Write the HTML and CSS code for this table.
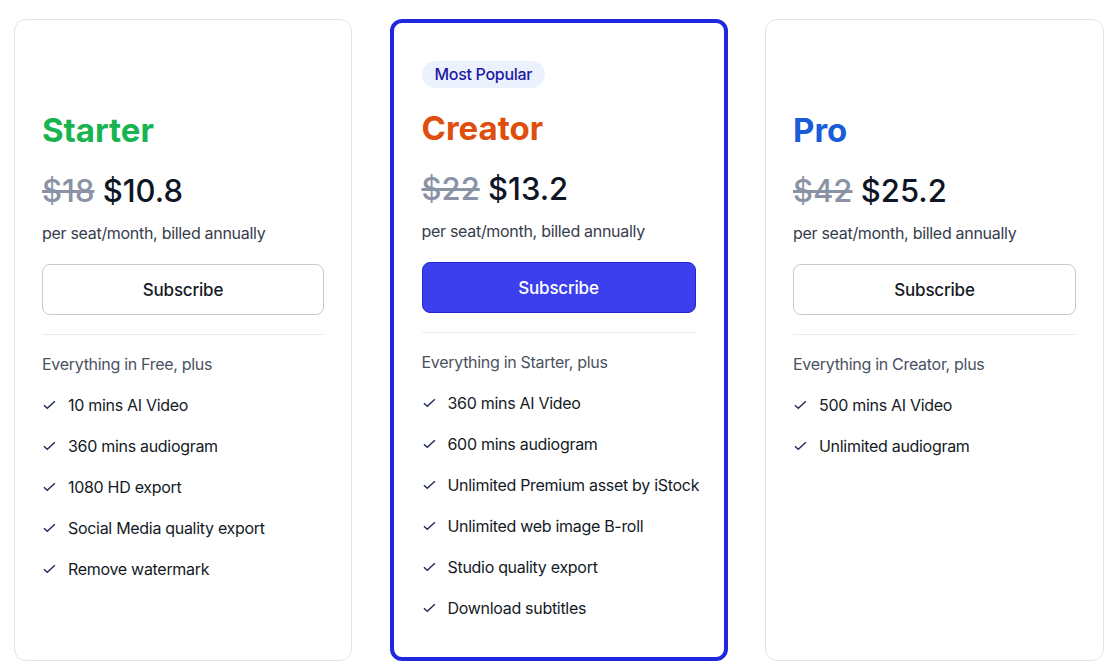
FILE: index.html
```html
<!DOCTYPE html>
<html lang="en">
<head>
    <meta charset="UTF-8">
    <meta name="viewport" content="width=device-width, initial-scale=1.0">
    <title>Pricing</title>
    <link rel="stylesheet" href="styles.css">
</head>
<body>
    <div class="plans">
        <!-- Starter -->
        <div class="card">
            <span class="badge hidden">Most Popular</span>
            <h2 class="plan-name starter">Starter</h2>
            <div class="price"><s class="old">$18</s> <span class="new">$10.8</span></div>
            <p class="per">per seat/month, billed annually</p>
            <button class="btn">Subscribe</button>
            <hr class="divider">
            <p class="plus">Everything in Free, plus</p>
            <ul class="features">
                <li><svg class="check" viewBox="0 0 14 10"><path d="M1 5.2 4.6 8.6 12.8 1"/></svg>10 mins AI Video</li>
                <li><svg class="check" viewBox="0 0 14 10"><path d="M1 5.2 4.6 8.6 12.8 1"/></svg>360 mins audiogram</li>
                <li><svg class="check" viewBox="0 0 14 10"><path d="M1 5.2 4.6 8.6 12.8 1"/></svg>1080 HD export</li>
                <li><svg class="check" viewBox="0 0 14 10"><path d="M1 5.2 4.6 8.6 12.8 1"/></svg>Social Media quality export</li>
                <li><svg class="check" viewBox="0 0 14 10"><path d="M1 5.2 4.6 8.6 12.8 1"/></svg>Remove watermark</li>
            </ul>
        </div>

        <!-- Creator -->
        <div class="card popular">
            <span class="badge">Most Popular</span>
            <h2 class="plan-name creator">Creator</h2>
            <div class="price"><s class="old">$22</s> <span class="new">$13.2</span></div>
            <p class="per">per seat/month, billed annually</p>
            <button class="btn primary">Subscribe</button>
            <hr class="divider">
            <p class="plus">Everything in Starter, plus</p>
            <ul class="features">
                <li><svg class="check" viewBox="0 0 14 10"><path d="M1 5.2 4.6 8.6 12.8 1"/></svg>360 mins AI Video</li>
                <li><svg class="check" viewBox="0 0 14 10"><path d="M1 5.2 4.6 8.6 12.8 1"/></svg>600 mins audiogram</li>
                <li><svg class="check" viewBox="0 0 14 10"><path d="M1 5.2 4.6 8.6 12.8 1"/></svg>Unlimited Premium asset by iStock</li>
                <li><svg class="check" viewBox="0 0 14 10"><path d="M1 5.2 4.6 8.6 12.8 1"/></svg>Unlimited web image B-roll</li>
                <li><svg class="check" viewBox="0 0 14 10"><path d="M1 5.2 4.6 8.6 12.8 1"/></svg>Studio quality export</li>
                <li><svg class="check" viewBox="0 0 14 10"><path d="M1 5.2 4.6 8.6 12.8 1"/></svg>Download subtitles</li>
            </ul>
        </div>

        <!-- Pro -->
        <div class="card">
            <span class="badge hidden">Most Popular</span>
            <h2 class="plan-name pro">Pro</h2>
            <div class="price"><s class="old">$42</s> <span class="new">$25.2</span></div>
            <p class="per">per seat/month, billed annually</p>
            <button class="btn">Subscribe</button>
            <hr class="divider">
            <p class="plus">Everything in Creator, plus</p>
            <ul class="features">
                <li><svg class="check" viewBox="0 0 14 10"><path d="M1 5.2 4.6 8.6 12.8 1"/></svg>500 mins AI Video</li>
                <li><svg class="check" viewBox="0 0 14 10"><path d="M1 5.2 4.6 8.6 12.8 1"/></svg>Unlimited audiogram</li>
            </ul>
        </div>
    </div>
</body>
</html>
```

FILE: styles.css
```css
body {
    margin: 0;
    font-family: 'Inter', 'Liberation Sans', sans-serif;
    background: #fff;
    color: #111827;
    letter-spacing: -0.3px;
}

.plans {
    display: grid;
    grid-template-columns: 338px 338px 339px;
    column-gap: 37.5px;
    padding: 19px 5px 0 14px;
}

.card {
    display: flex;
    flex-direction: column;
    align-items: flex-start;
    height: 642px;
    box-sizing: border-box;
    padding: 43px 27px 0;
    border: 1px solid #e3e4e8;
    border-radius: 12px;
}

.card.popular {
    padding: 38px 28px 0;
    border: 4px solid #2027de;
    border-radius: 12px;
}

.badge {
    height: 27px;
    line-height: 27px;
    padding: 0 13px;
    border-radius: 14px;
    background: #ebf1fd;
    color: #1d1aa5;
    font-size: 16px;
    font-weight: 500;
}

.badge.hidden {
    visibility: hidden;
}

.plan-name {
    margin: 20px 0 0;
    font-size: 33px;
    line-height: 40px;
    font-weight: 700;
    letter-spacing: 0;
}

.starter { color: #17b450; }
.creator { color: #de4e0c; }
.pro { color: #1a5cd8; }

.price {
    margin-top: 21px;
    font-size: 31px;
    line-height: 40px;
    font-weight: 500;
    letter-spacing: 0;
}

.price .old {
    color: #8a93a5;
}

.price .new {
    color: #0e1525;
}

.per {
    margin: 10px 0 0;
    font-size: 16px;
    line-height: 24px;
    color: #363d4c;
}

.btn {
    width: 100%;
    height: 51px;
    margin-top: 19px;
    font-family: inherit;
    font-size: 17px;
    font-weight: 500;
    letter-spacing: -0.2px;
    color: #161b26;
    background: #fff;
    border: 1px solid #c7cad1;
    border-radius: 8px;
}

.btn.primary {
    color: #fff;
    background: #3b3fee;
    border-color: #2327c9;
}

.divider {
    width: 100%;
    margin: 19px 0 0;
    border: none;
    border-top: 1px solid #ececef;
}

.plus {
    margin: 17px 0 0;
    font-size: 16px;
    line-height: 24px;
    color: #4a5262;
}

.features {
    list-style: none;
    margin: 17px 0 0;
    padding: 0;
    display: flex;
    flex-direction: column;
    gap: 17px;
}

.features li {
    display: flex;
    align-items: center;
    white-space: nowrap;
    font-size: 16px;
    line-height: 24px;
    color: #141a26;
}

.check {
    width: 13px;
    height: 10px;
    margin: 0 12px 0 1px;
    fill: none;
    stroke: #1f2a5c;
    stroke-width: 1.5;
}
```
